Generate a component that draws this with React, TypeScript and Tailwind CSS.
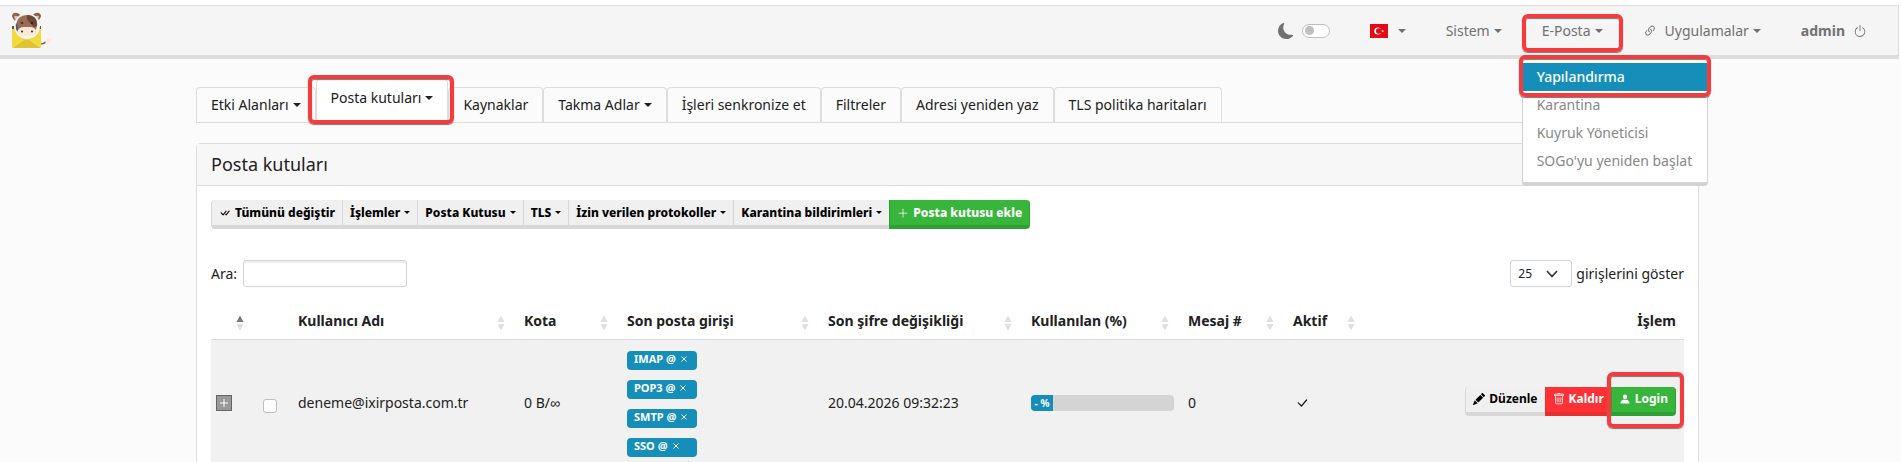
import type { ReactNode } from "react";
import {
  BsCheckAll,
  BsCheckLg,
  BsLink45Deg,
  BsMoonFill,
  BsPencilFill,
  BsPersonFill,
  BsPlusLg,
  BsPower,
  BsTrash,
} from "react-icons/bs";

function Caret() {
  return <span aria-hidden="true" className="inline-block border-x-4 border-t-4 border-x-transparent border-t-current" />;
}

function Highlight({ className }: { className: string }) {
  return (
    <span
      aria-hidden="true"
      className={`pointer-events-none absolute z-30 rounded-md border-4 border-[#f43c3c] shadow-[0_1px_1px_#777,inset_0_1px_1px_#777] ${className}`}
    />
  );
}

function Logo() {
  return (
    <svg viewBox="0 0 40 37" className="h-[37px] w-10" role="img" aria-label="mailcow">
      <path d="M28 32 Q32 32 35 29" fill="none" stroke="#8a5a3c" strokeWidth="1.6" />
      <path d="M33 30 Q34 26 37 26 Q38 27 40 26 Q39 32 34 31Z" fill="#fae9d5" />
      <path d="M0 15 L2 16 H27 L29 15 V35 Q29 36 27 36 H2 Q0 36 0 35Z" fill="#efd62f" />
      <path d="M0 16 L11 28 H18 L29 16 V35 L26 36 L15 30 L3 36 L0 35Z" fill="#f3da3c" />
      <path d="M1 36 L12 28 H17 L28 36Z" fill="#dfc334" />
      <path d="M0 14 h2 v3 h-2Z M27 14 h2 v3 h-2Z" fill="#6f4936" />
      <path d="M0 4 Q1 0 5 1 Q9 2 9 6 L5 10 Q1 8 0 4Z" fill="#8d6149" />
      <path d="M29 4 Q28 0 24 1 Q20 2 20 6 L24 10 Q28 8 29 4Z" fill="#8d6149" />
      <path d="M2 4 Q5 3 8 6 L5 9 Q2 7 2 4Z M27 4 Q24 3 21 6 L24 9 Q27 7 27 4Z" fill="#dcbfae" />
      <path d="M7 1 Q8 -1 12 0 L11 3Z M22 1 Q21 -1 17 0 L18 3Z" fill="#fbeedd" />
      <circle cx="15" cy="14" r="13" fill="#f4f4f4" />
      <path d="M5 18 Q3 10 7 6 Q10 3 16 3 Q25 4 25 12 L24 18Z" fill="#9c6d52" />
      <path d="M15 3 Q24 3 25 11 Q26 15 22 15 L17 10 Q14 7 15 3Z" fill="#6c4735" />
      <path d="M4 11 Q3 17 6 21 L6 14Z" fill="#3c6380" />
      <path d="M5 20 Q7 15 12 15 H18 Q23 15 25 20 Q25 24 15 24 Q5 24 5 20Z" fill="#fbe8d5" />
      <circle cx="10" cy="11" r="1.3" fill="#463830" />
      <circle cx="20" cy="11" r="1.3" fill="#2c2c2c" />
      <circle cx="10" cy="19.5" r="1.1" fill="#4b3227" />
      <circle cx="20" cy="19.5" r="1.1" fill="#4b3227" />
    </svg>
  );
}

function Flag() {
  return (
    <svg viewBox="0 0 18 14" className="h-[14px] w-[18px]" role="img" aria-label="Türkçe">
      <rect width="18" height="14" fill="#e30a17" />
      <circle cx="7.8" cy="7" r="3.5" fill="#fff" />
      <circle cx="8.8" cy="7" r="2.8" fill="#e30a17" />
      <path d="M10.9 7 L12.2 6.7 V5.7 L12.9 6.5 L13.9 6.2 L13.3 7 L13.9 7.8 L12.9 7.5 L12.2 8.3 V7.3Z" fill="#fff" />
    </svg>
  );
}

function NavButton({ children }: { children: ReactNode }) {
  return <button className="flex items-center gap-1">{children}</button>;
}

const menu = ["Yapılandırma", "Karantina", "Kuyruk Yöneticisi", "SOGo'yu yeniden başlat"];

function Navbar() {
  return (
    <header className="relative z-20 mt-[5px] mr-[2px] flex items-center justify-between border-t border-r border-b-4 border-[#ddd] bg-[#f5f5f5] pr-[31px] pl-3 text-sm text-[#717171]">
      <a href="#home" className="py-1.5">
        <Logo />
      </a>
      <nav className="flex items-center gap-10">
        <label className="flex items-center gap-2">
          <BsMoonFill className="h-4 w-4" />
          <input type="checkbox" role="switch" aria-label="Karanlık mod" className="peer sr-only" />
          <span className="flex h-[14px] w-7 items-center rounded-full border border-[#bfbfbf] bg-white px-[2px]">
            <span className="h-[9px] w-[9px] rounded-full bg-[#bfbfbf]" />
          </span>
        </label>
        <button aria-label="Dil" className="flex items-center gap-2.5">
          <Flag />
          <Caret />
        </button>
        <NavButton>
          Sistem
          <Caret />
        </NavButton>
        <div className="relative">
          <NavButton>
            E-Posta
            <Caret />
          </NavButton>
          <Highlight className="-inset-x-5 -top-[7px] -bottom-[11px]" />
          <ul className="absolute top-[37px] -left-5 rounded-b border border-b-4 border-[#d3d3d3] bg-white pt-1 pb-[7px] text-[#888]">
            {menu.map((item, i) => (
              <li key={item} className="relative">
                <a
                  href="#menu"
                  className={`block pr-[15px] pl-3.5 text-sm leading-7 whitespace-nowrap ${i === 0 ? "bg-[#158fba] font-medium text-white" : ""}`}
                >
                  {item}
                </a>
                {i === 0 && <Highlight className="-inset-x-1 -top-2 -bottom-1.5" />}
              </li>
            ))}
          </ul>
        </div>
        <button className="flex items-center gap-2">
          <BsLink45Deg className="h-[14px] w-[14px]" />
          <span className="flex items-center gap-1">
            Uygulamalar
            <Caret />
          </span>
        </button>
        <button className="flex items-center gap-2 font-bold">
          admin
          <BsPower className="h-[14px] w-[14px]" />
        </button>
      </nav>
    </header>
  );
}

const tabs = [
  { label: "Etki Alanları", caret: true },
  { label: "Posta kutuları", caret: true, active: true },
  { label: "Kaynaklar" },
  { label: "Takma Adlar", caret: true },
  { label: "İşleri senkronize et" },
  { label: "Filtreler" },
  { label: "Adresi yeniden yaz" },
  { label: "TLS politika haritaları" },
];

function Tabs() {
  return (
    <div role="tablist" className="flex items-end border-b border-[#ddd]">
      {tabs.map((t) => (
        <div key={t.label} className={`relative ${t.active ? "mb-0.5" : ""}`}>
          <button
            role="tab"
            aria-selected={!!t.active}
            className={`flex items-center gap-1 rounded-t border border-b-0 border-[#ddd] px-3.5 leading-5 ${t.active ? "bg-white pt-2 pb-3" : "py-[7px]"}`}
          >
            {t.label}
            {t.caret && <Caret />}
          </button>
          {t.active && <Highlight className="-top-1 -right-1.5 -bottom-1 -left-2" />}
        </div>
      ))}
    </div>
  );
}

const actions = ["İşlemler", "Posta Kutusu", "TLS", "İzin verilen protokoller", "Karantina bildirimleri"];

const grayButton = "flex items-center gap-1 border-l border-b-4 border-[#d7d7d7] bg-[#f0f0f0] px-[7px] text-black";
const greenButton = "flex items-center gap-1 rounded-r border-r border-b-4 border-l border-[#2fa036] bg-[#38b53b] px-[7px] text-white";

function Toolbar() {
  return (
    <div className="flex h-[29px] text-xs font-extrabold">
      <button className={`${grayButton} rounded-l`}>
        <BsCheckAll className="h-3 w-3" />
        Tümünü değiştir
      </button>
      {actions.map((a) => (
        <button key={a} className={grayButton}>
          {a}
          <span className="inline-block border-x-[3px] border-t-[3px] border-x-transparent border-t-current" />
        </button>
      ))}
      <button className={greenButton}>
        <BsPlusLg className="h-3 w-3" />
        Posta kutusu ekle
      </button>
    </div>
  );
}

const columns = [
  { label: "", width: "w-[44px]", sort: "asc" },
  { label: "", width: "w-[35px]" },
  { label: "Kullanıcı Adı", width: "w-[226px]", sort: "none" },
  { label: "Kota", width: "w-[103px]", sort: "none" },
  { label: "Son posta girişi", width: "w-[201px]", sort: "none" },
  { label: "Son şifre değişikliği", width: "w-[203px]", sort: "none" },
  { label: "Kullanılan (%)", width: "w-[157px]", sort: "none" },
  { label: "Mesaj #", width: "w-[105px]", sort: "none" },
  { label: "Aktif", width: "w-[81px]", sort: "none" },
  { label: "İşlem", width: "" },
];

function SortMark({ asc }: { asc: boolean }) {
  return (
    <svg viewBox="0 0 8 16" className="mt-1 mr-[3px] h-4 w-2" aria-hidden="true">
      <path d="M0.5 7 L4 0.5 L7.5 7Z" fill={asc ? "#777" : "#e0e0e0"} />
      <path d="M0.5 9 L4 15.5 L7.5 9Z" fill="#e0e0e0" />
    </svg>
  );
}

function MailboxTable() {
  return (
    <table className="w-full table-fixed text-left">
      <thead>
        <tr className="border-b border-[#ddd]">
          {columns.map((c, i) => (
            <th key={i} className={`h-9 px-2 font-bold ${c.width}`}>
              <div className={`flex items-center ${c.label === "İşlem" ? "justify-end" : "justify-between"}`}>
                <span>{c.label}</span>
                {c.sort && <SortMark asc={c.sort === "asc"} />}
              </div>
            </th>
          ))}
        </tr>
      </thead>
      <tbody>
        <tr className="bg-[#f1f1f1] [&>td]:px-2">
          <td>
            <button
              aria-label="Ayrıntılar"
              className="-ml-[3px] flex h-4 w-4 items-center justify-center border border-[#666] bg-[#999] text-white"
            >
              <svg viewBox="0 0 8 8" className="h-2 w-2" aria-hidden="true">
                <path d="M4 0 V8 M0 4 H8" stroke="currentColor" />
              </svg>
            </button>
          </td>
          <td>
            <input
              type="checkbox"
              aria-label="Seç"
              className="mt-1.5 block h-[14px] w-[14px] appearance-none rounded-[3px] border border-[#bfbfbf] bg-white"
            />
          </td>
          <td>deneme@ixirposta.com.tr</td>
          <td>0 B/∞</td>
          <td>
            <div className="flex flex-col gap-2.5 pt-[11px] pb-2.5">
              {["IMAP", "POP3", "SMTP", "SSO"].map((p) => (
                <span
                  key={p}
                  className="flex h-[19px] w-[70px] items-center gap-1 rounded bg-[#158fba] px-[7px] pb-0.5 text-[11px] font-bold text-white"
                >
                  {p} @
                  <svg viewBox="0 0 8 8" className="h-2 w-2" aria-hidden="true">
                    <path d="M1.5 1.5 L6.5 6.5 M6.5 1.5 L1.5 6.5" stroke="currentColor" />
                  </svg>
                </span>
              ))}
            </div>
          </td>
          <td>20.04.2026 09:32:23</td>
          <td className="pr-1.5!">
            <div className="h-4 overflow-hidden rounded bg-[#d4d4d4]">
              <div className="flex h-4 w-[22px] items-center justify-center bg-[#158fba] text-[10px] font-bold whitespace-nowrap text-white">
                - %
              </div>
            </div>
          </td>
          <td>0</td>
          <td>
            <BsCheckLg className="ml-0.5 h-[14px] w-[14px]" />
          </td>
          <td>
            <div className="-mt-1 flex h-[29px] justify-end text-xs font-bold">
              <button className={`${grayButton} rounded-l`}>
                <BsPencilFill className="h-3 w-3" />
                Düzenle
              </button>
              <button className="flex items-center gap-1 border-b-4 border-l border-[#e63030] bg-[#ff3136] px-[7px] text-white">
                <BsTrash className="h-3 w-3" />
                Kaldır
              </button>
              <div className="relative flex">
                <button className={greenButton}>
                  <BsPersonFill className="h-3 w-3" />
                  Login
                </button>
                <Highlight className="-top-[15px] -right-2 -bottom-3 -left-1" />
              </div>
            </div>
          </td>
        </tr>
      </tbody>
    </table>
  );
}

export default function App() {
  return (
    <div className="flex h-screen flex-col overflow-hidden bg-[#fbfbfb] font-['Noto_Sans',sans-serif] text-sm text-[#212121]">
      <div className="bg-white">
        <Navbar />
      </div>
      <main className="mx-auto flex w-full max-w-[1509px] flex-1 flex-col pt-5 pr-1.5">
        <Tabs />
        <section className="mt-5 shrink-0 rounded-t border border-[#ddd] bg-white">
          <h1 className="border-b border-[#ddd] bg-[#f7f7f7] px-3.5 text-lg leading-[41px]">Posta kutuları</h1>
          <div className="px-3.5 pt-3.5 pb-10">
            <Toolbar />
            <div className="mt-[31px] mb-4 flex items-center justify-between">
              <label className="flex items-center gap-1.5">
                Ara:
                <input
                  type="search"
                  className="h-[27px] w-[164px] rounded-[3px] border border-[#ced4da] bg-white px-2 shadow-[inset_0_2px_1px_#eee]"
                />
              </label>
              <label className="flex items-center gap-1">
                <span className="relative flex items-center">
                  <select className="h-[27px] w-[62px] appearance-none rounded-[3px] border border-[#ced4da] bg-white pl-[7px] text-xs">
                    <option>25</option>
                  </select>
                  <svg viewBox="0 0 12 8" className="pointer-events-none absolute right-3.5 h-2 w-3" aria-hidden="true">
                    <path d="M1 1 L6 6.5 L11 1" fill="none" stroke="#333" strokeWidth="1.7" />
                  </svg>
                </span>
                girişlerini göster
              </label>
            </div>
            <MailboxTable />
          </div>
        </section>
      </main>
    </div>
  );
}
